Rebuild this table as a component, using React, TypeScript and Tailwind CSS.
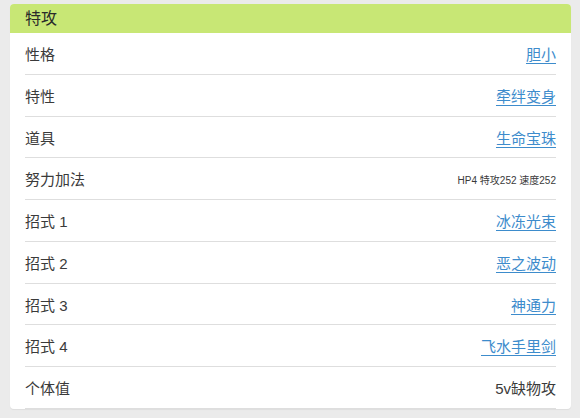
import React from "react";

const rows: { label: string; value: string; link?: boolean; small?: boolean }[] = [
  { label: "性格", value: "胆小", link: true },
  { label: "特性", value: "牵绊变身", link: true },
  { label: "道具", value: "生命宝珠", link: true },
  { label: "努力加法", value: "HP4 特攻252 速度252", small: true },
  { label: "招式 1", value: "冰冻光束", link: true },
  { label: "招式 2", value: "恶之波动", link: true },
  { label: "招式 3", value: "神通力", link: true },
  { label: "招式 4", value: "飞水手里剑", link: true },
  { label: "个体值", value: "5v缺物攻" },
];

export default function App() {
  return (
    <div
      className="w-[580px] h-[418px] bg-[#ebebeb] pt-[4px] overflow-hidden"
      style={{ fontFamily: '"Liberation Sans", "Noto Sans CJK SC", sans-serif' }}
    >
      <div className="ml-[10px] w-[561px] bg-white rounded-[4px] shadow-[0_1px_1px_rgba(0,0,0,0.06)]">
        <div className="h-[29px] bg-[#c8e775] rounded-t-[4px] pl-[15px] flex items-center text-[16px] text-[#2a2a2a] pt-[1px]">
          特攻
        </div>
        {rows.map((r) => (
          <div
            key={r.label}
            className="mx-[15px] h-[41.75px] border-b border-[#dedede] flex items-center justify-between pt-[4px]"
          >
            <span className="text-[15px] text-[#3a3a3a]">{r.label}</span>
            {r.link ? (
              <span className="text-[15px] text-[#3d8ccc] underline underline-offset-[3px] decoration-[1px]">
                {r.value}
              </span>
            ) : r.small ? (
              <span className="text-[10px] text-[#3a3a3a]">{r.value}</span>
            ) : (
              <span className="text-[15px] text-[#3a3a3a]">{r.value}</span>
            )}
          </div>
        ))}
      </div>
    </div>
  );
}
